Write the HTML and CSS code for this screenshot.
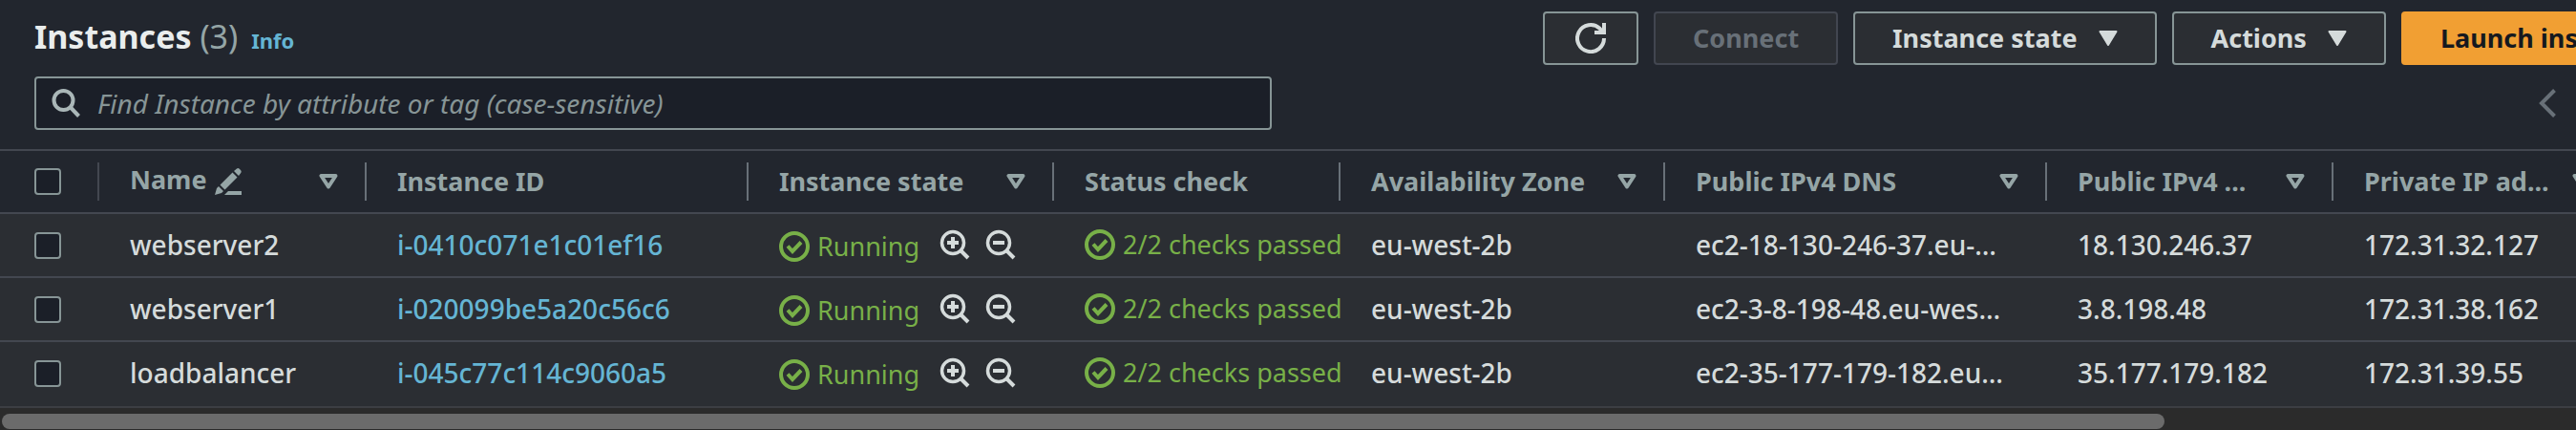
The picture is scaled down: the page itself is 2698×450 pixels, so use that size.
FILE: index.html
```html
<!DOCTYPE html>
<html lang="en">
<head>
<meta charset="utf-8">
<title>Instances</title>
<link rel="stylesheet" href="styles.css">
</head>
<body>
<svg class="sprite" aria-hidden="true">
  <symbol id="search" viewBox="0 0 32 32"><circle cx="12.500" cy="13" r="10" fill="none" stroke="currentColor" stroke-width="4"/><path d="M19.500 20l9 9.500" fill="none" stroke="currentColor" stroke-width="4"/></symbol>
  <symbol id="zoom-in" viewBox="0 0 32 32"><circle cx="14" cy="14" r="11.500" fill="none" stroke="currentColor" stroke-width="3.500"/><path d="M22 22l8 8M14 8v12M8 14h12" fill="none" stroke="currentColor" stroke-width="4"/></symbol>
  <symbol id="zoom-out" viewBox="0 0 32 32"><circle cx="14" cy="14" r="11.500" fill="none" stroke="currentColor" stroke-width="3.500"/><path d="M22 22l8 8M8 14h12" fill="none" stroke="currentColor" stroke-width="4"/></symbol>
  <symbol id="ok" viewBox="0 0 32 32"><circle cx="16" cy="16" r="14" fill="none" stroke="currentColor" stroke-width="4"/><path d="M9 15.500l5 5.500 9-9.500" fill="none" stroke="currentColor" stroke-width="4"/></symbol>
  <symbol id="sort" viewBox="0 0 20 16"><path d="M2.500 2h15L10 13.500z" fill="none" stroke="currentColor" stroke-width="4" stroke-linejoin="round"/></symbol>
  <symbol id="caret" viewBox="0 0 20 16"><path d="M1.500 1h17L10 15z" fill="currentColor" stroke="currentColor" stroke-width="2" stroke-linejoin="round"/></symbol>
  <symbol id="refresh" viewBox="0 0 32 32"><path d="M30 16A14 14 0 1 1 25.500 5.800L29 9.500" fill="none" stroke="currentColor" stroke-width="4"/><path d="M30 0v10H20" fill="none" stroke="currentColor" stroke-width="4"/></symbol>
  <symbol id="edit" viewBox="0 0 28 28"><path d="M0 28l2-7 2-2 5 5-2 2zM5.500 17.500L18.500 4.500l5 5-13 13zM20 3l3-2.500q1.500-1 3 .5l1.200 1.200q1 1.300 0 2.800L25 8zM10 28l4-4h14v4z" fill="currentColor"/></symbol>
  <symbol id="prev" viewBox="0 0 18 32"><path d="M16.500 2.500L3 16l13.500 13.500" fill="none" stroke="currentColor" stroke-width="4"/></symbol>
</svg>
<main class="panel">
  <header class="header">
    <div class="bar">
      <div class="heading">
        <h1 class="title">Instances <span class="count">(3)</span></h1>
        <a class="info" href="#">Info</a>
      </div>
      <div class="actions">
        <button class="btn btn-icon" aria-label="Refresh"><svg class="icon"><use href="#refresh"/></svg></button>
        <button class="btn" disabled>Connect</button>
        <button class="btn">Instance state<svg class="caret"><use href="#caret"/></svg></button>
        <button class="btn">Actions<svg class="caret"><use href="#caret"/></svg></button>
        <button class="btn btn-primary">Launch instances</button>
      </div>
    </div>
    <div class="tools">
      <label class="search"><svg class="icon"><use href="#search"/></svg><input class="search-input" type="search" aria-label="Find Instance" placeholder="Find Instance by attribute or tag (case-sensitive)"></label>
      <button class="prev" aria-label="Previous page"><svg class="chevron"><use href="#prev"/></svg></button>
    </div>
  </header>
  <div class="scroller">
    <table class="table">
      <colgroup><col class="w-check"><col class="w-name"><col class="w-wide"><col class="w-state"><col class="w-base"><col class="w-zone"><col class="w-wide"><col class="w-base"><col class="w-base"></colgroup>
      <thead>
        <tr>
          <th><div class="head head-check"><input class="check" type="checkbox" aria-label="Select all"></div></th>
          <th><div class="head"><span class="label name">Name <svg class="edit"><use href="#edit"/></svg></span><svg class="sort"><use href="#sort"/></svg></div></th>
          <th><div class="head"><span class="label">Instance ID</span></div></th>
          <th><div class="head"><span class="label">Instance state</span><svg class="sort"><use href="#sort"/></svg></div></th>
          <th><div class="head"><span class="label">Status check</span></div></th>
          <th><div class="head"><span class="label">Availability Zone</span><svg class="sort"><use href="#sort"/></svg></div></th>
          <th><div class="head"><span class="label">Public IPv4 DNS</span><svg class="sort"><use href="#sort"/></svg></div></th>
          <th><div class="head"><span class="label">Public IPv4 ...</span><svg class="sort"><use href="#sort"/></svg></div></th>
          <th><div class="head"><span class="label">Private IP ad...</span><svg class="sort"><use href="#sort"/></svg></div></th>
        </tr>
      </thead>
      <tbody>
        <tr>
          <td class="cell-check"><input class="check" type="checkbox" aria-label="Select webserver2"></td>
          <td>webserver2</td>
          <td><a class="link" href="#">i-0410c071e1c01ef16</a></td>
          <td><div class="state"><span class="status running"><svg class="icon"><use href="#ok"/></svg>Running</span><button class="zoom" aria-label="Add filter"><svg class="icon"><use href="#zoom-in"/></svg></button><button class="zoom" aria-label="Exclude filter"><svg class="icon"><use href="#zoom-out"/></svg></button></div></td>
          <td class="cell-clip"><span class="status"><svg class="icon"><use href="#ok"/></svg>2/2 checks passed</span></td>
          <td>eu-west-2b</td>
          <td>ec2-18-130-246-37.eu-…</td>
          <td>18.130.246.37</td>
          <td>172.31.32.127</td>
        </tr>
        <tr>
          <td class="cell-check"><input class="check" type="checkbox" aria-label="Select webserver1"></td>
          <td>webserver1</td>
          <td><a class="link" href="#">i-020099be5a20c56c6</a></td>
          <td><div class="state"><span class="status running"><svg class="icon"><use href="#ok"/></svg>Running</span><button class="zoom" aria-label="Add filter"><svg class="icon"><use href="#zoom-in"/></svg></button><button class="zoom" aria-label="Exclude filter"><svg class="icon"><use href="#zoom-out"/></svg></button></div></td>
          <td class="cell-clip"><span class="status"><svg class="icon"><use href="#ok"/></svg>2/2 checks passed</span></td>
          <td>eu-west-2b</td>
          <td>ec2-3-8-198-48.eu-wes…</td>
          <td>3.8.198.48</td>
          <td>172.31.38.162</td>
        </tr>
        <tr>
          <td class="cell-check"><input class="check" type="checkbox" aria-label="Select loadbalancer"></td>
          <td>loadbalancer</td>
          <td><a class="link" href="#">i-045c77c114c9060a5</a></td>
          <td><div class="state"><span class="status running"><svg class="icon"><use href="#ok"/></svg>Running</span><button class="zoom" aria-label="Add filter"><svg class="icon"><use href="#zoom-in"/></svg></button><button class="zoom" aria-label="Exclude filter"><svg class="icon"><use href="#zoom-out"/></svg></button></div></td>
          <td class="cell-clip"><span class="status"><svg class="icon"><use href="#ok"/></svg>2/2 checks passed</span></td>
          <td>eu-west-2b</td>
          <td>ec2-35-177-179-182.eu…</td>
          <td>35.177.179.182</td>
          <td>172.31.39.55</td>
        </tr>
      </tbody>
    </table>
  </div>
  <div class="track"><div class="thumb"></div></div>
</main>
</body>
</html>
```
FILE: styles.css
```css
* { box-sizing: border-box; }

body {
  margin: 0;
  background: #22262e;
  color: #d5dbdb;
  font-family: "Noto Sans", "Open Sans", sans-serif;
  font-size: 28px;
  line-height: 40px;
  overflow: hidden;
}

button, input { font: inherit; color: inherit; margin: 0; }
a { text-decoration: none; color: #65b5d4; }
svg { display: block; flex: none; }

.sprite { position: absolute; width: 0; height: 0; }
.icon { width: 32px; height: 32px; }
.panel { overflow: hidden; }

/* The toolbar runs past the right edge of the window. */
.header { width: calc(100% + 132px); padding: 12px 0 20px 36px; }
.bar { display: flex; justify-content: space-between; height: 56px; }
.heading { display: flex; align-items: baseline; gap: 14px; }
.title { margin: 0; font-size: 34px; line-height: 52px; font-weight: 700; color: #eaeded; }
.count { font-weight: 400; color: #95a5a6; }
.info { font-size: 22px; font-weight: 700; }

.actions { display: flex; gap: 16px; }
.btn {
  display: flex;
  align-items: center;
  gap: 22px;
  padding: 0 39px;
  border: 2px solid #879596;
  border-radius: 4px;
  background: #2b2e33;
  font-size: 27px;
  font-weight: 700;
  white-space: nowrap;
}
.btn:disabled { border-color: #424650; color: #687078; }
.btn-icon { width: 100px; padding: 0 32px; }
.btn-primary { background: #f19f33; border-color: #f19f33; color: #16191f; }
.caret, .sort { width: 20px; height: 16px; }

.tools { display: flex; justify-content: space-between; align-items: center; margin-top: 12px; }
.search {
  display: flex;
  align-items: center;
  gap: 16px;
  width: 1296px;
  height: 56px;
  padding: 0 16px;
  border: 2px solid #879596;
  border-radius: 4px;
  background: #1b1f28;
  color: #aab7b8;
}
.search-input { flex: 1; border: 0; padding: 0; outline: 0; background: none; }
.search-input::placeholder { font-style: italic; color: #879596; opacity: 1; }
.prev { border: 0; padding: 0; margin-right: 153px; background: none; color: #687078; }
.chevron { width: 18px; height: 32px; }

.scroller { overflow: hidden; border-top: 2px solid #434750; }
.table { table-layout: fixed; width: 2744px; border-collapse: separate; border-spacing: 0; }
.w-check { width: 104px; }
.w-name { width: 280px; }
.w-wide { width: 400px; }
.w-state { width: 320px; }
.w-zone { width: 340px; }
.w-base { width: 300px; }

th { padding: 0; height: 66px; border-bottom: 2px solid #434750; text-align: left; font-size: 27px; font-weight: 700; color: #95a5a6; }
.head {
  display: flex;
  align-items: center;
  justify-content: space-between;
  height: 40px;
  padding: 0 28px 0 32px;
  border-right: 2px solid #687078;
}
.head-check { padding-left: 36px; border-color: #434750; }
.label { white-space: nowrap; }
.name { display: flex; gap: 8px; align-items: center; padding-bottom: 4px; }
.edit { width: 28px; height: 28px; margin-top: 4px; }

td { height: 67px; padding: 12px 0 0 32px; border-bottom: 2px solid #434750; background: #2b2e33; white-space: nowrap; vertical-align: top; font-weight: 500; }
tbody tr:last-child td { height: 69px; border-bottom-color: #3c3e43; }
.cell-check { padding: 19px 0 0 36px; }
.cell-clip { overflow: hidden; }

.check {
  appearance: none;
  display: block;
  width: 28px;
  height: 28px;
  border: 2px solid #879596;
  border-radius: 4px;
  background: #1b1f28;
}
.state, .status { display: flex; align-items: center; }
.state { height: 40px; }
.status { gap: 8px; color: #78b048; font-size: 27px; font-weight: 400; }
.running { padding-top: 4px; margin-right: 21px; }
.zoom { border: 0; padding: 0; margin-right: 16px; background: none; }

.track { padding: 6px 0 1px 2px; background: #2b2b2b; }
.thumb { width: 84%; height: 16px; border-radius: 8px; background: #6b6b6b; }
```
